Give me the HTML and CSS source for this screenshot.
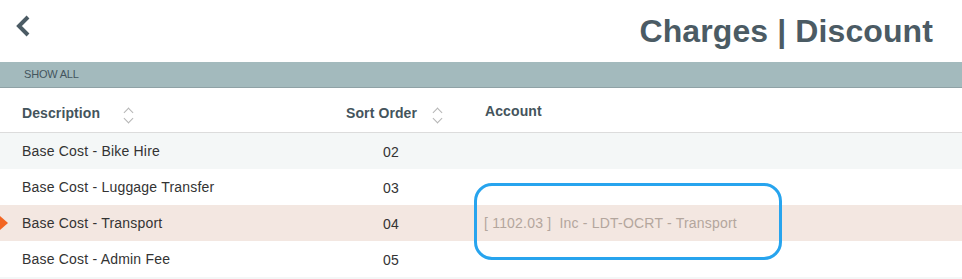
FILE: index.html
```html
<!DOCTYPE html>
<html lang="en">
<head>
    <meta charset="UTF-8">
    <title>Charges | Discount</title>
    <link rel="stylesheet" href="styles.css">
</head>
<body>
    <header class="top">
        <a class="back" href="#">
            <svg width="16" height="24" viewBox="0 0 16 24"><path d="M13 3 L4 12 L13 21" fill="none" stroke="#4b5b64" stroke-width="4"/></svg>
        </a>
        <h1>Charges | Discount</h1>
    </header>

    <div class="filter-bar">SHOW ALL</div>

    <div class="grid">
        <div class="row head">
            <div class="cell">Description <span class="sorter"></span></div>
            <div class="cell">Sort Order <span class="sorter"></span></div>
            <div class="cell">Account</div>
        </div>
        <div class="row alt">
            <div class="cell">Base Cost - Bike Hire</div>
            <div class="cell num">02</div>
            <div class="cell"></div>
        </div>
        <div class="row">
            <div class="cell">Base Cost - Luggage Transfer</div>
            <div class="cell num">03</div>
            <div class="cell"></div>
        </div>
        <div class="row selected">
            <div class="cell">Base Cost - Transport</div>
            <div class="cell num">04</div>
            <div class="cell account">[ 1102.03 ]&nbsp; Inc - LDT-OCRT - Transport</div>
        </div>
        <div class="row">
            <div class="cell">Base Cost - Admin Fee</div>
            <div class="cell num">05</div>
            <div class="cell"></div>
        </div>
        <div class="row alt last"></div>
    </div>

    <div class="highlight"></div>
</body>
</html>
```

FILE: styles.css
```css
/* Basic styling */
* { box-sizing: border-box; margin: 0; padding: 0; }
html { overflow: hidden; }
body { font-family: "Liberation Sans", Arial, sans-serif; background: #fff; color: #333; width: 962px; height: 279px; overflow: hidden; position: relative; }

.top { height: 62px; display: flex; justify-content: space-between; align-items: flex-start; padding: 0 29px 0 15px; }
.back { display: block; margin-top: 14px; }
.top h1 { font-size: 32px; font-weight: bold; color: #4b5b64; margin-top: 13px; letter-spacing: 0.1px; }

.filter-bar { height: 26px; background: #a3babd; border-bottom: 1px solid #8fa2a6; font-size: 11px; color: #44555d; padding: 6px 0 0 24px; letter-spacing: -0.2px; }

.grid { display: flex; flex-direction: column; }
.row { display: grid; grid-template-columns: 346px 139px 1fr; height: 36px; align-items: center; font-size: 14px; letter-spacing: 0.2px; }
.row .cell { white-space: nowrap; }
.row .cell:first-child { padding-left: 22px; }
.row .num { padding-left: 37px; padding-top: 2px; }
.row.last { height: 2px; }

.row.head { height: 45px; border-bottom: 1px solid #dcdcdc; font-weight: bold; color: #44545c; letter-spacing: 0.1px; }
.row.head .cell { display: flex; align-items: center; padding-top: 5px; }
.row.head .cell:last-child { padding-top: 1px; }

.sorter { display: inline-block; position: relative; width: 12px; height: 18px; margin-left: 22px; margin-top: 6px; }
.sorter::before, .sorter::after { content: ""; position: absolute; left: 3px; width: 6px; height: 6px; border: solid #b5b5b5; border-width: 1px 0 0 1px; }
.sorter::before { top: 2px; transform: rotate(45deg); }
.sorter::after { top: 8px; transform: rotate(225deg); }
.row.head .cell:nth-child(2) .sorter { margin-left: 14px; }

.row.alt { background: #f4f7f7; }
.row.selected { background: #f3e7e1; position: relative; }
.row.selected::before { content: ""; position: absolute; left: 0; top: 11px; border-style: solid; border-width: 7px 0 7px 8px; border-color: transparent transparent transparent #f26522; }
.account { color: #b3a69d; padding-left: 0; margin-left: -1px; }

.highlight { position: absolute; left: 474px; top: 183px; width: 308px; height: 77px; border: 3px solid #27a4ee; border-radius: 18px; }
```
